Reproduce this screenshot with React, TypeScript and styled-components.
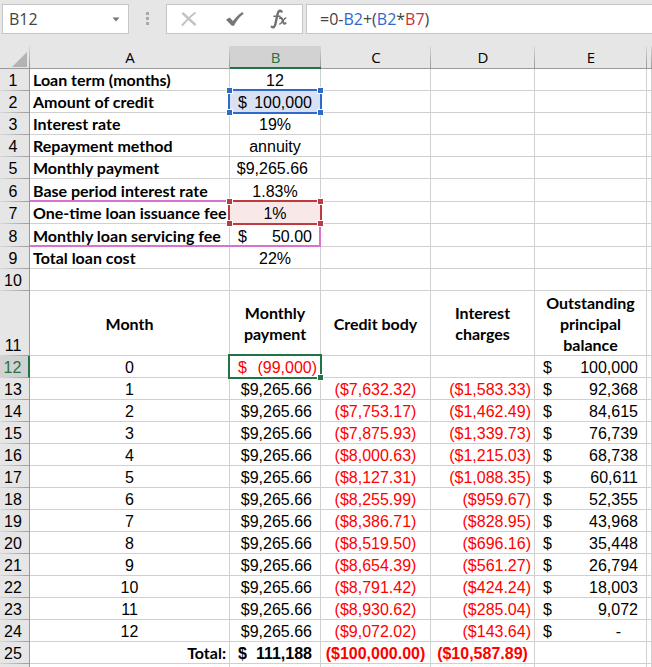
import React from "react";
import styled, { createGlobalStyle, css } from "styled-components";

const GREEN = "#217346";
const BLUE = "#3069c8";
const CRIMSON = "#bf3a40";
const PINK = "#d971cd";
const GRID = "#d0d0d0";

const GlobalStyle = createGlobalStyle`
  *, *::before, *::after { box-sizing: border-box; }
  body {
    margin: 0;
    background: #fff;
    color: #000;
    font-family: "Liberation Sans", Arial, sans-serif;
    font-size: 16px;
  }
`;

const Workbook = styled.main`
  display: flex;
  flex-direction: column;
  height: 100vh;
  overflow: hidden;
`;

const FormulaBar = styled.div`
  display: flex;
  flex: none;
  padding: 4px 0 12px 2px;
  background: #e6e6e6;
  font-family: "Open Sans", "Noto Sans", sans-serif;
  font-size: 16px;
  color: #444;
`;

const boxed = css`
  display: flex;
  align-items: center;
  height: 30px;
  background: #fff;
  border: 1px solid #c6c6c6;
`;

const NameBox = styled.div`
  ${boxed}
  width: 127px;
  padding-right: 8px;
`;

const NameInput = styled.input`
  flex: 1;
  min-width: 0;
  padding: 0 0 0 6px;
  border: 0;
  outline: 0;
  background: transparent;
  font: inherit;
  color: inherit;
`;

const IconButton = styled.button`
  display: flex;
  align-items: center;
  justify-content: center;
  padding: 0;
  border: 0;
  background: transparent;
  color: inherit;
`;

const Grip = styled.div`
  display: flex;
  flex-direction: column;
  align-items: center;
  gap: 2px;
  width: 37px;
  padding-top: 8px;
`;

const GripDot = styled.span`
  width: 3px;
  height: 3px;
  background: #a9a9a9;
`;

const Actions = styled.div`
  ${boxed}
  justify-content: space-between;
  width: 137px;
  padding: 0 14px 0 12px;
  margin-right: 3px;
`;

const FormulaInput = styled.div`
  ${boxed}
  flex: 1;
  padding-left: 13px;
  border-right: 0;
  outline: 0;
  white-space: pre;
`;

const Ref = styled.span<{ $color: string }>`
  color: ${(p) => p.$color};
`;

const Sheet = styled.table`
  width: 100%;
  table-layout: fixed;
  border-collapse: separate;
  border-spacing: 0;
`;

const Col = styled.col<{ $width?: number }>`
  width: ${(p) => (p.$width ? `${p.$width}px` : "auto")};
`;

const headerCell = css`
  padding: 0;
  font-family: "Open Sans", "Noto Sans", sans-serif;
  font-weight: 400;
`;

const ColumnHeader = styled.th<{ $active?: boolean }>`
  ${headerCell}
  height: 23px;
  font-size: 15px;
  line-height: 20px;
  color: ${(p) => (p.$active ? GREEN : "#000")};
  background:
    linear-gradient(#d8d8d8, #999) right / 1px 100% no-repeat,
    ${(p) => (p.$active ? "#d2d2d2" : "#e6e6e6")};
  border-bottom: ${(p) => (p.$active ? `2px solid ${GREEN}` : "1px solid #999")};
`;

const Corner = styled.td`
  height: 23px;
  padding: 4px 3px 0 0;
  background: linear-gradient(#d8d8d8, #999) right / 1px 100% no-repeat, #e6e6e6;
  border-bottom: 1px solid #999;

  svg {
    display: block;
    margin-left: auto;
  }
`;

const RowHeader = styled.th<{ $active?: boolean }>`
  ${headerCell}
  padding-right: 3px;
  font-family: "Liberation Sans", Arial, sans-serif;
  line-height: 18px;
  vertical-align: bottom;
  color: ${(p) => (p.$active ? GREEN : "#000")};
  background:
    linear-gradient(90deg, #d8d8d8, #999) bottom / 100% 1px no-repeat border-box,
    ${(p) => (p.$active ? "#d2d2d2" : "#e6e6e6")};
  border-right: ${(p) => (p.$active ? `2px solid ${GREEN}` : "1px solid #999")};
  border-bottom: 1px solid transparent;
`;

const Row = styled.tr<{ $height: number }>`
  height: ${(p) => p.$height}px;
`;

type Align = "left" | "center" | "right";

const Cell = styled.td<{ $align: Align; $bold?: boolean; $label?: boolean; $red?: boolean; $fill?: string; $inset: number; $middle?: boolean }>`
  position: relative;
  padding: 0 ${(p) => (p.$align === "left" ? 0 : p.$inset)}px 0 ${(p) => (p.$align === "right" ? 0 : p.$inset)}px;
  border-right: 1px solid ${GRID};
  border-bottom: 1px solid ${GRID};
  text-align: ${(p) => p.$align};
  vertical-align: ${(p) => (p.$middle ? "middle" : "bottom")};
  line-height: ${(p) => (p.$middle ? 21 : p.$label ? 20 : 18)}px;
  white-space: ${(p) => (p.$middle ? "normal" : "nowrap")};
  font-family: ${(p) => (p.$label ? "Lato, sans-serif" : "inherit")};
  font-weight: ${(p) => (p.$bold ? 700 : 400)};
  color: ${(p) => (p.$red ? "#f00" : "#000")};
  background: ${(p) => p.$fill ?? "#fff"};
`;

const Accounting = styled.div`
  display: flex;
  justify-content: space-between;
`;

const Amount = styled.span<{ $indent: number }>`
  padding-right: ${(p) => p.$indent}px;
`;

const Outline = styled.div<{ $color: string }>`
  position: absolute;
  z-index: 2;
  inset: -2px;
  border: 2px solid ${(p) => p.$color};
  pointer-events: none;
`;

const Handle = styled.span<{ $color: string; $v: "top" | "bottom"; $h: "left" | "right" }>`
  position: absolute;
  ${(p) => p.$v}: -3px;
  ${(p) => p.$h}: -3px;
  width: 5px;
  height: 5px;
  background: ${(p) => p.$color};
  box-shadow: 0 0 0 1px #fff;
`;

const RangeEdge = styled.div<{ $sides: string }>`
  position: absolute;
  z-index: 1;
  inset: -2px -1px -1px 0;
  border: 0 solid ${PINK};
  border-width: ${(p) => p.$sides};
  pointer-events: none;
`;

type CellData = {
  text?: string;
  align?: Align;
  bold?: boolean;
  label?: boolean;
  red?: boolean;
  middle?: boolean;
  symbol?: boolean;
  indent?: number;
  inset?: number;
  fill?: string;
  marker?: "blue" | "red" | "active";
  edge?: string;
};

const label = (text: string): CellData => ({ text, bold: true, label: true, inset: 3 });
const center = (text: string): CellData => ({ text, align: "center", inset: 0 });
const money = (text: string): CellData => ({ text, symbol: true, inset: 8, indent: 8 });
const heading = (text: string): CellData => ({ text, align: "center", bold: true, label: true, middle: true, inset: 8 });
const blank: CellData = {};

const summary: { height: number; cells: CellData[] }[] = [
  { height: 22, cells: [label("Loan term (months)"), center("12")] },
  { height: 22, cells: [label("Amount of credit"), { ...money("100,000"), fill: "#d9e1f4", marker: "blue" }] },
  { height: 22, cells: [label("Interest rate"), center("19%")] },
  { height: 22, cells: [label("Repayment method"), center("annuity")] },
  { height: 22, cells: [label("Monthly payment"), { text: "$9,265.66", align: "right", inset: 12 }] },
  { height: 23, cells: [label("Base period interest rate"), center("1.83%")] },
  {
    height: 22,
    cells: [
      { ...label("One-time loan issuance fee"), edge: "2px 0 0 0" },
      { ...center("1%"), fill: "#f8e8e8", marker: "red" },
    ],
  },
  {
    height: 23,
    cells: [
      { ...label("Monthly loan servicing fee"), edge: "0 0 2px 0" },
      { ...money("50.00"), edge: "0 2px 2px 0" },
    ],
  },
  { height: 22, cells: [label("Total loan cost"), center("22%")] },
  { height: 22, cells: [blank, blank] },
];

const schedule: [string, string, string][] = [
  ["($7,632.32)", "($1,583.33)", "92,368"],
  ["($7,753.17)", "($1,462.49)", "84,615"],
  ["($7,875.93)", "($1,339.73)", "76,739"],
  ["($8,000.63)", "($1,215.03)", "68,738"],
  ["($8,127.31)", "($1,088.35)", "60,611"],
  ["($8,255.99)", "($959.67)", "52,355"],
  ["($8,386.71)", "($828.95)", "43,968"],
  ["($8,519.50)", "($696.16)", "35,448"],
  ["($8,654.39)", "($561.27)", "26,794"],
  ["($8,791.42)", "($424.24)", "18,003"],
  ["($8,930.62)", "($285.04)", "9,072"],
  ["($9,072.02)", "($143.64)", "-"],
];

const rows: { height: number; cells: CellData[] }[] = [
  ...summary.map((r) => ({ height: r.height, cells: [...r.cells, blank, blank, blank] })),
  {
    height: 65,
    cells: [
      heading("Month"),
      heading("Monthly payment"),
      heading("Credit body"),
      heading("Interest charges"),
      heading("Outstanding principal balance"),
    ],
  },
  {
    height: 22,
    cells: [center("0"), { ...money("(99,000)"), red: true, indent: 3, marker: "active" }, blank, blank, money("100,000")],
  },
  ...schedule.map(([body, interest, balance], i) => ({
    height: 22,
    cells: [
      center(String(i + 1)),
      { text: "$9,265.66", align: "right", inset: 8 } as CellData,
      { ...center(body), red: true },
      { text: interest, align: "right", red: true, inset: 3 } as CellData,
      { ...money(balance), indent: balance === "-" ? 25 : 8 },
    ],
  })),
  {
    height: 22,
    cells: [
      { text: "Total:", align: "right", bold: true, label: true, inset: 3 },
      { ...money("111,188"), bold: true },
      { ...center("($100,000.00)"), bold: true, red: true },
      { ...center("($10,587.89)"), bold: true, red: true },
      blank,
    ],
  },
  { height: 22, cells: [blank, blank, blank, blank, blank] },
];

const ACTIVE_ROW = 12;
const LAST_NUMBERED_ROW = 25;
const columns = ["A", "B", "C", "D", "E"];
const widths = [30, 200, 91, 110, 104, 112];

function Marker({ kind }: { kind: "blue" | "red" | "active" }) {
  if (kind === "active") {
    return (
      <Outline $color={GREEN}>
        <Handle $color={GREEN} $v="bottom" $h="right" />
      </Outline>
    );
  }
  const color = kind === "blue" ? BLUE : CRIMSON;
  return (
    <Outline $color={color}>
      <Handle $color={color} $v="top" $h="left" />
      <Handle $color={color} $v="top" $h="right" />
      <Handle $color={color} $v="bottom" $h="left" />
      <Handle $color={color} $v="bottom" $h="right" />
    </Outline>
  );
}

function GridCell({ data }: { data: CellData }) {
  return (
    <Cell
      $align={data.symbol ? "left" : data.align ?? "left"}
      $bold={data.bold}
      $label={data.label}
      $red={data.red}
      $fill={data.fill}
      $inset={data.inset ?? 0}
      $middle={data.middle}
    >
      {data.symbol ? (
        <Accounting>
          <span>$</span>
          <Amount $indent={data.indent ?? 0}>{data.text}</Amount>
        </Accounting>
      ) : (
        data.text
      )}
      {data.edge && <RangeEdge $sides={data.edge} />}
      {data.marker && <Marker kind={data.marker} />}
    </Cell>
  );
}

export default function App() {
  return (
    <Workbook>
      <GlobalStyle />
      <FormulaBar>
        <NameBox>
          <NameInput aria-label="Name box" defaultValue="B12" />
          <IconButton type="button" aria-label="Show names">
            <svg width="8" height="5" viewBox="0 0 8 5">
              <path d="M0.5 0.5h7L4 4.5z" fill="#777" />
            </svg>
          </IconButton>
        </NameBox>
        <Grip>
          <GripDot />
          <GripDot />
          <GripDot />
        </Grip>
        <Actions>
          <IconButton type="button" aria-label="Cancel">
            <svg width="20" height="18" viewBox="0 0 20 18" fill="none" stroke="#c3c3c3" strokeLinecap="round">
              <path d="M4 3.5C8 7 12 11 16 14.5" strokeWidth="2.4" />
              <path d="M16 3C11 6.5 7 11 3.5 15" strokeWidth="2" />
            </svg>
          </IconButton>
          <IconButton type="button" aria-label="Enter">
            <svg width="20" height="18" viewBox="0 0 20 18">
              <path d="M1 9.8L4.6 7.4L8 11C11 7.2 14 4 17.4 2L18.6 3.8C14.5 7 11.5 10.8 9 15.8H6.8z" fill="#777" />
            </svg>
          </IconButton>
          <IconButton type="button" aria-label="Insert function">
            <svg width="18" height="20" viewBox="0 0 18 20" fill="none" stroke="#707070" strokeLinecap="round">
              <path d="M11.5 2.6C10 0.8 8.4 1.6 7.6 5L5.4 15C4.8 18 3.2 19 1.8 17.8" strokeWidth="2.4" />
              <path d="M4 7.2H10" strokeWidth="1.6" />
              <path d="M10 9.2C11.6 8.2 12.2 9.8 12.7 11.5C13.2 14 14 15.4 15.6 14.2" strokeWidth="2" />
              <path d="M15.8 9C14 9 11.8 14.8 9.8 15" strokeWidth="1.5" />
            </svg>
          </IconButton>
        </Actions>
        <FormulaInput role="textbox" aria-label="Formula" contentEditable suppressContentEditableWarning spellCheck={false}>
          <span>
            =0-<Ref $color={BLUE}>B2</Ref>+(<Ref $color={BLUE}>B2</Ref>*<Ref $color="#c9303a">B7</Ref>)
          </span>
        </FormulaInput>
      </FormulaBar>
      <Sheet>
        <colgroup>
          {widths.map((w, i) => (
            <Col key={i} $width={w} />
          ))}
          <Col />
        </colgroup>
        <thead>
          <tr>
            <Corner>
              <svg width="15" height="15" viewBox="0 0 15 15">
                <path d="M15 0V15H0z" fill="#b3b3b3" />
              </svg>
            </Corner>
            {columns.map((c) => (
              <ColumnHeader key={c} scope="col" $active={c === "B"}>
                {c}
              </ColumnHeader>
            ))}
            <ColumnHeader scope="col" aria-label="F" />
          </tr>
        </thead>
        <tbody>
          {rows.map((row, r) => (
            <Row key={r} $height={row.height}>
              <RowHeader scope="row" $active={r + 1 === ACTIVE_ROW}>
                {r < LAST_NUMBERED_ROW ? r + 1 : null}
              </RowHeader>
              {row.cells.map((cell, c) => (
                <GridCell key={c} data={cell} />
              ))}
              <GridCell data={blank} />
            </Row>
          ))}
        </tbody>
      </Sheet>
    </Workbook>
  );
}
